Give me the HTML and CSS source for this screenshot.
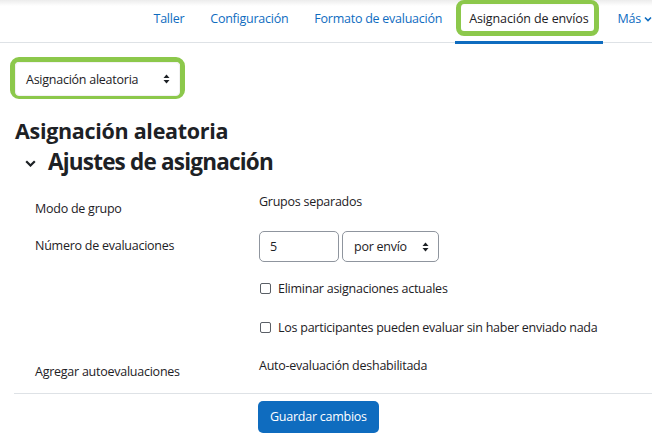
FILE: index.html
```html
<!DOCTYPE html>
<html lang="es">
<head>
<meta charset="utf-8">
<title>Asignación de envíos</title>
<link rel="stylesheet" href="styles.css">
</head>
<body>
<div class="topShade"></div>
<nav class="secNav">
	<a class="navItem" href="#">Taller</a>
	<a class="navItem" href="#">Configuración</a>
	<a class="navItem" href="#">Formato de evaluación</a>
	<a class="navItem active" href="#"><span class="mark">Asignación de envíos</span></a>
	<a class="navItem more" href="#">Más
		<svg class="moreIcon" width="8" height="6" viewBox="0 0 8 6"><polyline points="1,1.5 4,4.5 7,1.5" fill="none" stroke="#0f6cbf" stroke-width="1.6"/></svg>
	</a>
</nav>

<div class="page">
	<div class="markBox">
		<div class="selectBox">
			<span>Asignación aleatoria</span>
			<svg class="updown" width="7" height="10" viewBox="0 0 7 10"><polygon points="0.5,4 3.5,0.5 6.5,4" fill="#1d2125"/><polygon points="0.5,6 3.5,9.5 6.5,6" fill="#1d2125"/></svg>
		</div>
	</div>

	<h2 class="pageTitle">Asignación aleatoria</h2>
	<h3 class="sectionTitle">
		<svg class="chev" width="11" height="7" viewBox="0 0 11 7"><polyline points="1.2,1.2 5.5,5.5 9.8,1.2" fill="none" stroke="#1d2125" stroke-width="2.2"/></svg>
		Ajustes de asignación
	</h3>

	<div class="form">
		<div class="frow r1">
			<div class="flabel">Modo de grupo</div>
			<div class="fvalue">Grupos separados</div>
		</div>
		<div class="frow r2">
			<div class="flabel">Número de evaluaciones</div>
			<div class="fvalue inline">
				<div class="textInput">5</div>
				<div class="smallSelect">
					<span>por envío</span>
					<svg class="updown" width="7" height="10" viewBox="0 0 7 10"><polygon points="0.5,4 3.5,0.5 6.5,4" fill="#1d2125"/><polygon points="0.5,6 3.5,9.5 6.5,6" fill="#1d2125"/></svg>
				</div>
			</div>
		</div>
		<div class="frow r3">
			<div class="flabel"></div>
			<div class="fvalue check"><span class="box"></span>Eliminar asignaciones actuales</div>
		</div>
		<div class="frow r4">
			<div class="flabel"></div>
			<div class="fvalue check"><span class="box"></span>Los participantes pueden evaluar sin haber enviado nada</div>
		</div>
		<div class="frow r5">
			<div class="flabel">Agregar autoevaluaciones</div>
			<div class="fvalue">Auto-evaluación deshabilitada</div>
		</div>
	</div>

	<div class="actions">
		<div class="btnPrimary">Guardar cambios</div>
	</div>
</div>
</body>
</html>
```

FILE: styles.css
```css
html, body {
	margin: 0;
	padding: 0;
	background: #fff;
}
body {
	width: 652px;
	height: 434px;
	overflow: hidden;
	position: relative;
	font-family: "Open Sans", "Noto Sans", sans-serif;
	font-size: 12.5px;
	letter-spacing: -0.25px;
	color: #1d2125;
}
.topShade {
	height: 6px;
	background: linear-gradient(#ececec, #fff);
	position: absolute;
	left: 0;
	right: 0;
	top: 0;
}

/* second navigation */
.secNav {
	height: 43px;
	border-bottom: 1px solid #dee2e6;
	display: flex;
	justify-content: flex-end;
	align-items: stretch;
	box-sizing: border-box;
	padding-right: 0;
}
.navItem {
	display: flex;
	align-items: flex-start;
	padding: 10px 13px 0 13px;
	color: #0f6cbf;
	text-decoration: none;
	white-space: nowrap;
	box-sizing: border-box;
}
.navItem.formato {
	padding-right: 12px;
}
.navItem.active {
	padding: 0 4px 0 1px;
	border-bottom: 3px solid #0f6cbf;
	height: 44px;
	color: #1d2125;
	position: relative;
	z-index: 1;
}
.mark {
	display: block;
	border: 5px solid #8cc84b;
	border-top-width: 4px;
	border-radius: 8px;
	padding: 6px 5px 0 8px;
	box-sizing: border-box;
	height: 36px;
	letter-spacing: -0.1px;
}
.more {
	padding-left: 15px;
	padding-right: 0;
}
.moreIcon {
	margin: 6px 0 0 3px;
}

.page {
	padding: 0 0 0 14px;
}

/* select with annotation frame */
.markBox {
	margin: 14px 0 0 -4px;
	width: 175px;
	height: 42px;
	border: 5px solid #8cc84b;
	border-radius: 9px;
	box-sizing: border-box;
	padding: 0;
}
.selectBox {
	height: 32px;
	display: flex;
	align-items: center;
	justify-content: space-between;
	padding: 0 9px 0 10px;
	border: 1px solid #f2f2f2;
	border-radius: 4px;
	background: #fff;
}
.updown {
	display: block;
}

.pageTitle {
	margin: 19px 0 0 1px;
	font-size: 21.5px;
	font-weight: 700;
	letter-spacing: -0.3px;
	line-height: 26px;
}
.sectionTitle {
	margin: 3px 0 0 11px;
	font-size: 22.5px;
	font-weight: 700;
	letter-spacing: -0.8px;
	line-height: 30px;
	display: flex;
	align-items: center;
}
.chev {
	margin: 3px 12px 0 0;
}

/* form */
.form {
	padding-left: 21px;
}
.frow {
	display: grid;
	grid-template-columns: 224px 1fr;
}
.flabel {
	white-space: nowrap;
}
.fvalue {
	white-space: nowrap;
}
.r1 {
	margin-top: 16px;
}
.r1 .flabel {
	padding-top: 7px;
}
.r2 {
	margin-top: 14px;
}
.r2 .flabel {
	padding-top: 6px;
}
.inline {
	display: flex;
	gap: 3px;
}
.textInput {
	width: 80px;
	height: 31px;
	box-sizing: border-box;
	border: 1px solid #8f959e;
	border-radius: 5px;
	padding: 6px 0 0 10px;
}
.smallSelect {
	width: 97px;
	height: 31px;
	box-sizing: border-box;
	border: 1px solid #8f959e;
	border-radius: 5px;
	display: flex;
	align-items: center;
	justify-content: space-between;
	padding: 0 9px 0 11px;
}
.check {
	display: flex;
	align-items: center;
}
.box {
	width: 11px;
	height: 11px;
	border: 1px solid #5a5f66;
	border-radius: 2px;
	box-sizing: border-box;
	margin: 0 7px 0 1px;
}
.r3 {
	margin-top: 18px;
}
.r4 {
	margin-top: 22px;
}
.r5 {
	margin-top: 21px;
}
.r5 .flabel {
	padding-top: 6px;
}

.actions {
	margin-top: 13px;
	border-top: 1px solid #dee2e6;
	padding: 7px 0 0 244px;
}
.btnPrimary {
	display: inline-block;
	background: #0f6cbf;
	color: #fff;
	border-radius: 5px;
	height: 32px;
	line-height: 31px;
	padding: 0 12px;
	box-sizing: border-box;
}
```
